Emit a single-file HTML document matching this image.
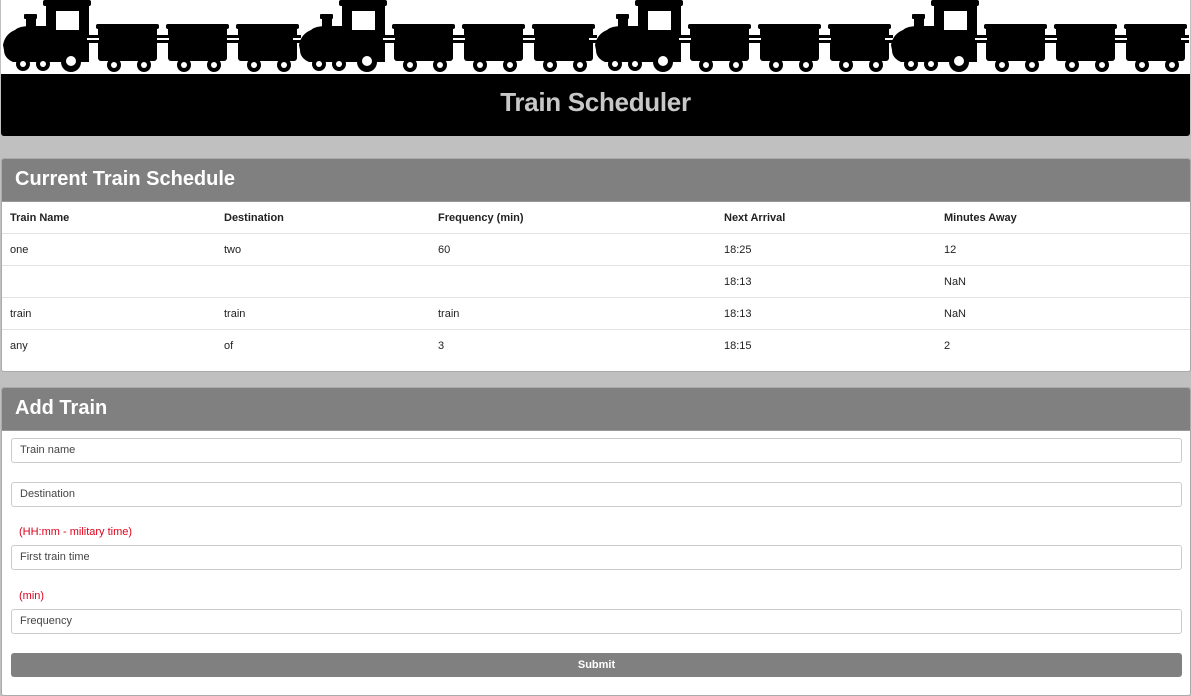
<!DOCTYPE html>
<html><head><style>
body{margin:0;background:#c0c0c0;font-family:"Liberation Sans",sans-serif;width:1191px;height:696px;overflow:hidden;}
.hdr{position:absolute;left:1px;top:0;width:1189px;height:136px;}
.trains{position:absolute;left:0;top:0;width:1189px;height:74px;background:#fff}
.bar{position:absolute;left:0;top:74px;width:1189px;height:62px;background:#000;border-radius:0 0 3px 3px;color:#c8c8c8;font-size:26px;font-weight:bold;text-align:center;line-height:56px;letter-spacing:-.3px}
.panel{position:absolute;left:1px;width:1188px;background:#fff;border:1px solid #aaa;border-radius:3px;overflow:hidden}
.ph{background:#808080;color:#fff;font-size:20px;font-weight:bold;height:42px;line-height:40px;padding-left:13px;border-bottom:1px solid #999}
table{border-collapse:collapse;width:100%;font-size:11px;color:#222}
td,th{text-align:left;padding:0 8px;height:31px;border-top:1px solid #e3e3e3}
th{border-top:none;font-weight:bold}
.in{margin:0 8px 0 9px;height:23px;border:1px solid #ccc;border-radius:3px;font-size:11px;color:#444;line-height:23px;padding-left:8px}
.lab{color:#e0001a;font-size:11px;padding-left:17px}
</style></head><body>
<div class="hdr">
<svg class="trains" width="1189" height="74" viewBox="0 0 1189 74">
<defs>
<g id="t">
<rect x="42" y="0" width="48" height="6" rx="2"/>
<rect x="45" y="3" width="43" height="35"/>
<rect x="23" y="14" width="13" height="5" rx="1"/>
<rect x="25" y="16" width="10" height="14"/>
<path d="M2 45 Q4 34 14 30 Q18 26 30 26 L88 26 L88 62 L12 62 Q3 58 3 50 Z"/>
<rect x="55" y="11" width="23" height="19" fill="#fff"/>
<circle cx="22" cy="64" r="7"/><circle cx="22" cy="64" r="3" fill="#fff"/>
<circle cx="42" cy="64" r="7"/><circle cx="42" cy="64" r="3" fill="#fff"/>
<circle cx="70" cy="62" r="10"/><circle cx="70" cy="61" r="5" fill="#fff"/>
<g id="car"><rect x="95" y="24" width="63" height="5" rx="2"/><rect x="97" y="26" width="59" height="35" rx="3"/>
<circle cx="113" cy="65" r="7"/><circle cx="113" cy="65" r="3" fill="#fff"/>
<circle cx="143" cy="65" r="7"/><circle cx="143" cy="65" r="3" fill="#fff"/>
<rect x="86" y="35" width="12" height="8"/><rect x="86" y="38" width="12" height="2" fill="#fff"/></g>
<use href="#car" x="70"/><use href="#car" x="140"/>
<rect x="292" y="35" width="8" height="8"/><rect x="292" y="38" width="8" height="2" fill="#fff"/>
</g></defs>
<use href="#t" x="0"/><use href="#t" x="296"/><use href="#t" x="592"/><use href="#t" x="888"/>
</svg>
<div class="bar">Train Scheduler</div>
</div>
<div class="panel" style="top:158px;height:212px">
<div class="ph">Current Train Schedule</div>
<table>
<tr><th style="width:198px">Train Name</th><th style="width:198px">Destination</th><th style="width:270px">Frequency (min)</th><th style="width:204px">Next Arrival</th><th>Minutes Away</th></tr>
<tr><td>one</td><td>two</td><td>60</td><td>18:25</td><td>12</td></tr>
<tr><td></td><td></td><td></td><td>18:13</td><td>NaN</td></tr>
<tr><td>train</td><td>train</td><td>train</td><td>18:13</td><td>NaN</td></tr>
<tr><td>any</td><td>of</td><td>3</td><td>18:15</td><td>2</td></tr>
</table>
</div>
<div class="panel" style="top:387px;height:307px">
<div class="ph">Add Train</div>
<div style="height:7px"></div>
<div class="in">Train name</div>
<div style="height:19px"></div>
<div class="in">Destination</div>
<div class="lab" style="height:38px;line-height:51px">(HH:mm - military time)</div>
<div class="in">First train time</div>
<div class="lab" style="height:39px;line-height:53px">(min)</div>
<div class="in">Frequency</div>
<div style="margin:19px 8px 0 9px;height:24px;background:#808080;border-radius:3px;color:#fff;font-size:11px;font-weight:bold;text-align:center;line-height:24px">Submit</div>
</div>
</body></html>
